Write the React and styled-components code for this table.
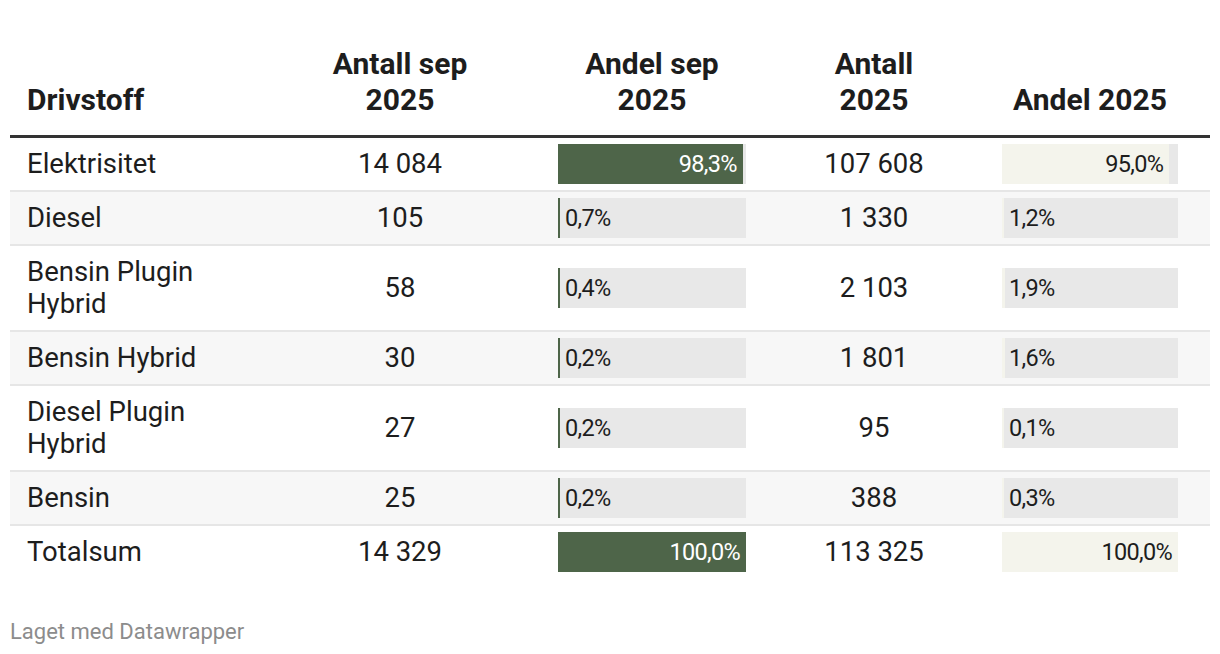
import React from "react"
import styled, { createGlobalStyle } from "styled-components"

const GlobalStyle = createGlobalStyle`
  body {
    margin: 0;
    background: #ffffff;
    font-family: Roboto, "Liberation Sans", sans-serif;
    color: #1d1d1d;
  }
`

const COLUMNS = "270px 240px 264px 180px 246px"

const ChartWrapper = styled.div`
  width: 1200px;
  padding: 46px 10px 0px 10px;
`

const HeaderRow = styled.div`
  display: grid;
  grid-template-columns: ${COLUMNS};
  align-items: end;
  border-bottom: 3px solid #333333;
  padding-bottom: 17px;
`

const HeaderCell = styled.div`
  font-size: 30px;
  font-weight: 700;
  line-height: 36px;
  text-align: ${({ align }) => align || "center"};
  padding: ${({ pad }) => pad || "0px"};
`

const Row = styled.div`
  display: grid;
  grid-template-columns: ${COLUMNS};
  align-items: center;
  padding: 6px 0px;
  background: ${({ striped }) => (striped ? "#f7f7f7" : "#ffffff")};
  border-bottom: ${({ last }) => (last ? "none" : "2px solid #e6e6e6")};
`

const NameCell = styled.div`
  font-size: 27.5px;
  line-height: 32px;
  padding: 4px 50px 4px 17px;
`

const NumberCell = styled.div`
  font-size: 27.5px;
  line-height: 32px;
  padding: 4px 0px;
  text-align: center;
`

const BarCell = styled.div`
  display: flex;
  padding-left: ${({ offset }) => offset}px;
`

const BarTrack = styled.div`
  position: relative;
  width: ${({ size }) => size}px;
  height: 40px;
  background: ${({ track }) => track};
`

const BarFill = styled.div`
  position: absolute;
  left: 0;
  top: 0;
  bottom: 0;
  background: ${({ fill }) => fill};
`

const BarLabel = styled.div`
  position: absolute;
  top: 0;
  height: 40px;
  line-height: 40px;
  font-size: 23.5px;
  font-weight: 400;
  letter-spacing: -0.7px;
  white-space: nowrap;
  color: ${({ light }) => (light ? "#ffffff" : "#1d1d1d")};
`

const Footer = styled.div`
  margin-top: 41px;
  font-size: 22px;
  color: #8c8c8c;
`

const rows = [
  { name: "Elektrisitet", sep: "14 084", sepShare: 98.3, year: "107 608", yearShare: 95.0 },
  { name: "Diesel", sep: "105", sepShare: 0.7, year: "1 330", yearShare: 1.2 },
  { name: "Bensin Plugin Hybrid", sep: "58", sepShare: 0.4, year: "2 103", yearShare: 1.9 },
  { name: "Bensin Hybrid", sep: "30", sepShare: 0.2, year: "1 801", yearShare: 1.6 },
  { name: "Diesel Plugin Hybrid", sep: "27", sepShare: 0.2, year: "95", yearShare: 0.1 },
  { name: "Bensin", sep: "25", sepShare: 0.2, year: "388", yearShare: 0.3 },
  { name: "Totalsum", sep: "14 329", sepShare: 100, year: "113 325", yearShare: 100 },
]

const fmt = (v) => v.toFixed(1).replace(".", ",") + "%"

const Bar = ({ value, size, offset, fill, track, light }) => {
  const inside = value > 50
  const width = Math.max((value / 100) * size, 2)
  const labelPos = inside
    ? { right: size - width + 6 }
    : { left: 7 }
  return (
    <BarCell offset={offset}>
      <BarTrack size={size} track={track}>
        <BarFill fill={fill} style={{ width }} />
        <BarLabel light={inside && light} style={labelPos}>
          {fmt(value)}
        </BarLabel>
      </BarTrack>
    </BarCell>
  )
}

const App = () => {
  return (
    <>
      <GlobalStyle />
      <ChartWrapper>
        <HeaderRow>
          <HeaderCell align="left" pad="0px 0px 0px 17px">Drivstoff</HeaderCell>
          <HeaderCell pad="0px 40px">Antall sep 2025</HeaderCell>
          <HeaderCell pad="0px 60px">Andel sep 2025</HeaderCell>
          <HeaderCell pad="0px 40px">Antall 2025</HeaderCell>
          <HeaderCell pad="0px 0px 0px 6px">Andel 2025</HeaderCell>
        </HeaderRow>
        {rows.map((r, i) => (
          <Row key={r.name} striped={i % 2 === 1} last={i === rows.length - 1}>
            <NameCell>{r.name}</NameCell>
            <NumberCell>{r.sep}</NumberCell>
            <Bar value={r.sepShare} size={188} offset={38} fill="#4e6549" track="#e8e8e8" light />
            <NumberCell>{r.year}</NumberCell>
            <Bar value={r.yearShare} size={176} offset={38} fill="#f4f4ec" track="#e8e8e8" />
          </Row>
        ))}
        <Footer>Laget med Datawrapper</Footer>
      </ChartWrapper>
    </>
  )
}

export default App
